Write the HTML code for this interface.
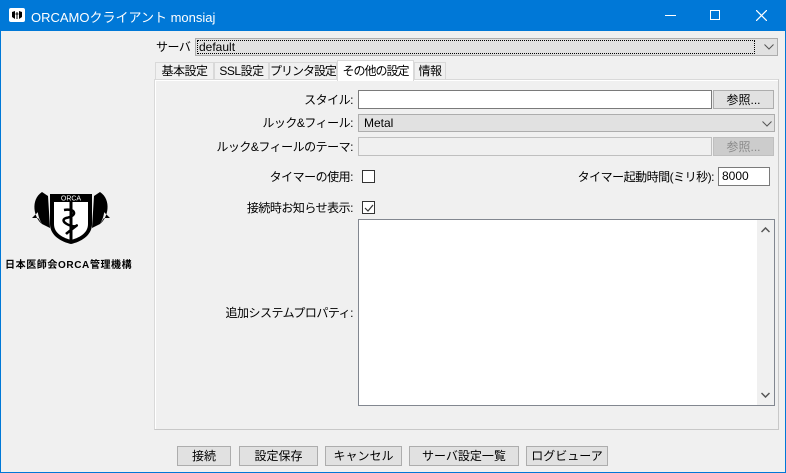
<!DOCTYPE html>
<html><head><meta charset="utf-8"><style>
*{box-sizing:border-box;margin:0;padding:0}
body{width:786px;height:473px;overflow:hidden;background:#f0f0f0;font-family:"Liberation Sans","Noto Sans CJK JP",sans-serif;font-size:12px;color:#000;position:relative}
.a{position:absolute;white-space:nowrap}
.title{left:0;top:0;width:786px;height:31px;background:#0078d7;color:#fff;font-size:13px}
.bd{border:1px solid #7a7a7a}
.btn{position:absolute;background:#e1e1e1;border:1px solid #adadad;text-align:center;line-height:18px;white-space:nowrap}
.lbl{position:absolute;text-align:right;line-height:18px;white-space:nowrap;letter-spacing:-0.5px}
.tab{position:absolute;top:62px;height:18px;border:1px solid #d9d9d9;border-bottom:none;background:#f0f0f0;text-align:center;line-height:17px;white-space:nowrap;letter-spacing:-0.5px;overflow:hidden}
</style></head><body>
<div class="a title">
 <div class="a" style="left:9px;top:8px;width:16px;height:14px;background:#fff;border-radius:2px"><svg width="16" height="14"><path d="M3 4 L6 3 L6 11 L3 9Z M13 4 L10 3 L10 11 L13 9Z" fill="#000"/><path d="M8 4 V11 M6.5 6 H9.5" stroke="#000" stroke-width="1"/></svg></div>
 <div class="a" style="left:31px;top:7px">ORCAMOクライアント monsiaj</div>
 <div class="a" style="left:665px;top:15px;width:11px;height:1px;background:#fff"></div>
 <div class="a" style="left:710px;top:10px;width:10px;height:10px;border:1px solid #fff"></div>
 <svg class="a" style="left:756px;top:10px" width="11" height="11"><path d="M0 0L11 11M11 0L0 11" stroke="#fff" stroke-width="1.2"/></svg>
</div>
<div class="a" style="left:0;top:31px;width:1px;height:442px;background:#0078d7"></div>
<div class="a" style="right:0;top:31px;width:1px;height:442px;background:#0078d7"></div>
<div class="a" style="left:0;bottom:0;width:786px;height:1px;background:#0078d7"></div>

<!-- logo -->
<svg class="a" style="left:28px;top:188px" width="86" height="60" viewBox="0 0 86 60">
 <path d="M14 4 C2 12 6 30 14 36 L10 30 L4 30 L10 24 Z" fill="#000"/>
 <path d="M14 4 C8 14 8 26 14 36 L22 40 L20 8Z" fill="#000"/>
 <path d="M72 4 C84 12 80 30 72 36 L76 30 L82 30 L76 24Z" fill="#000"/>
 <path d="M72 4 C78 14 78 26 72 36 L64 40 L66 8Z" fill="#000"/>
 <path d="M22 6 H64 V36 C64 48 52 54 43 56 C34 54 22 48 22 36Z" fill="#000"/>
 <path d="M26 14 H60 V36 C60 46 50 50 43 52 C36 50 26 46 26 36Z" fill="#fff"/>
 <text x="43" y="12.5" font-size="7" fill="#fff" text-anchor="middle" font-family="Liberation Sans">ORCA</text>
 <path d="M43 14 V52" stroke="#000" stroke-width="3"/>
 <path d="M36 22 C48 20 50 28 38 30 C30 33 44 40 48 38 C52 35 40 44 38 46" stroke="#000" stroke-width="2.5" fill="none"/>
</svg>
<div class="a" style="left:5px;top:256px;font-size:10px;font-weight:bold;letter-spacing:0.6px">日本医師会ORCA管理機構</div>

<div class="lbl" style="left:156px;top:38px">サーバ</div>
<div class="a" style="left:195px;top:38px;width:583px;height:18px;background:#e1e1e1;border:1px solid #adadad">
 <div class="a" style="left:1px;top:1px;width:558px;height:14px;border:1px dotted #000;line-height:12px;padding-left:1px">default</div>
 <svg class="a" style="left:568px;top:5px" width="10" height="6"><path d="M0.5 0.5L5 5L9.5 0.5" stroke="#555" fill="none"/></svg>
</div>

<div class="tab" style="left:155px;width:59px">基本設定</div>
<div class="tab" style="left:214px;width:55px">SSL設定</div>
<div class="tab" style="left:269px;width:68px;letter-spacing:-1px">プリンタ設定</div>
<div class="tab" style="left:337px;top:60px;height:21px;width:77px;background:#fff;z-index:2;line-height:20px;letter-spacing:-1px">その他の設定</div>
<div class="tab" style="left:414px;width:32px">情報</div>
<div class="a" style="left:154px;top:79px;width:625px;height:351px;border:1px solid #d9d9d9;border-right-color:#c8c8c8;border-bottom-color:#c8c8c8;box-shadow:inset 1px 1px 0 #fff"></div>

<div class="lbl" style="left:200px;width:153px;top:91px">スタイル:</div>
<div class="a bd" style="left:358px;top:90px;width:354px;height:19px;background:#fff"></div>
<div class="btn" style="left:713px;top:90px;width:61px;height:19px">参照...</div>

<div class="lbl" style="left:200px;width:153px;top:114px">ルック&amp;フィール:</div>
<div class="a" style="left:358px;top:114px;width:417px;height:18px;background:#e1e1e1;border:1px solid #adadad;line-height:16px;padding-left:5px">Metal
 <svg class="a" style="left:403px;top:6px" width="10" height="6"><path d="M0.5 0.5L5 5L9.5 0.5" stroke="#555" fill="none"/></svg></div>

<div class="lbl" style="left:200px;width:153px;top:138px">ルック&amp;フィールのテーマ:</div>
<div class="a" style="left:358px;top:137px;width:354px;height:19px;background:#f0f0f0;border:1px solid #bfbfbf"></div>
<div class="btn" style="left:713px;top:137px;width:61px;height:19px;background:#ccc;border-color:#bfbfbf;color:#8a8a8a">参照...</div>

<div class="lbl" style="left:200px;width:153px;top:168px">タイマーの使用:</div>
<div class="a" style="left:362px;top:170px;width:13px;height:13px;border:1px solid #333;background:#fff"></div>
<div class="lbl" style="left:540px;width:174px;top:168px">タイマー起動時間(ミリ秒):</div>
<div class="a bd" style="left:718px;top:167px;width:52px;height:19px;background:#fff;line-height:17px;padding-left:3px">8000</div>

<div class="lbl" style="left:200px;width:153px;top:199px">接続時お知らせ表示:</div>
<div class="a" style="left:362px;top:201px;width:13px;height:13px;border:1px solid #333;background:#fff"><svg class="a" style="left:1px;top:1px" width="10" height="10"><path d="M1 5L4 8L9 2" stroke="#333" fill="none" stroke-width="1.2"/></svg></div>

<div class="lbl" style="left:200px;width:153px;top:304px">追加システムプロパティ:</div>
<div class="a" style="left:358px;top:219px;width:417px;height:187px;border:1px solid #828790;background:#fff">
 <div class="a" style="right:0;top:0;width:17px;height:185px;background:#f0f0f0"></div>
 <svg class="a" style="right:4px;top:7px" width="9" height="6"><path d="M0.5 5L4.5 1L8.5 5" stroke="#555" fill="none" stroke-width="1.5"/></svg>
 <svg class="a" style="right:4px;bottom:7px" width="9" height="6"><path d="M0.5 1L4.5 5L8.5 1" stroke="#555" fill="none" stroke-width="1.5"/></svg>
</div>

<div class="btn" style="left:177px;top:446px;width:54px;height:20px">接続</div>
<div class="btn" style="left:239px;top:446px;width:79px;height:20px">設定保存</div>
<div class="btn" style="left:325px;top:446px;width:77px;height:20px">キャンセル</div>
<div class="btn" style="left:409px;top:446px;width:110px;height:20px">サーバ設定一覧</div>
<div class="btn" style="left:526px;top:446px;width:82px;height:20px">ログビューア</div>
</body></html>
